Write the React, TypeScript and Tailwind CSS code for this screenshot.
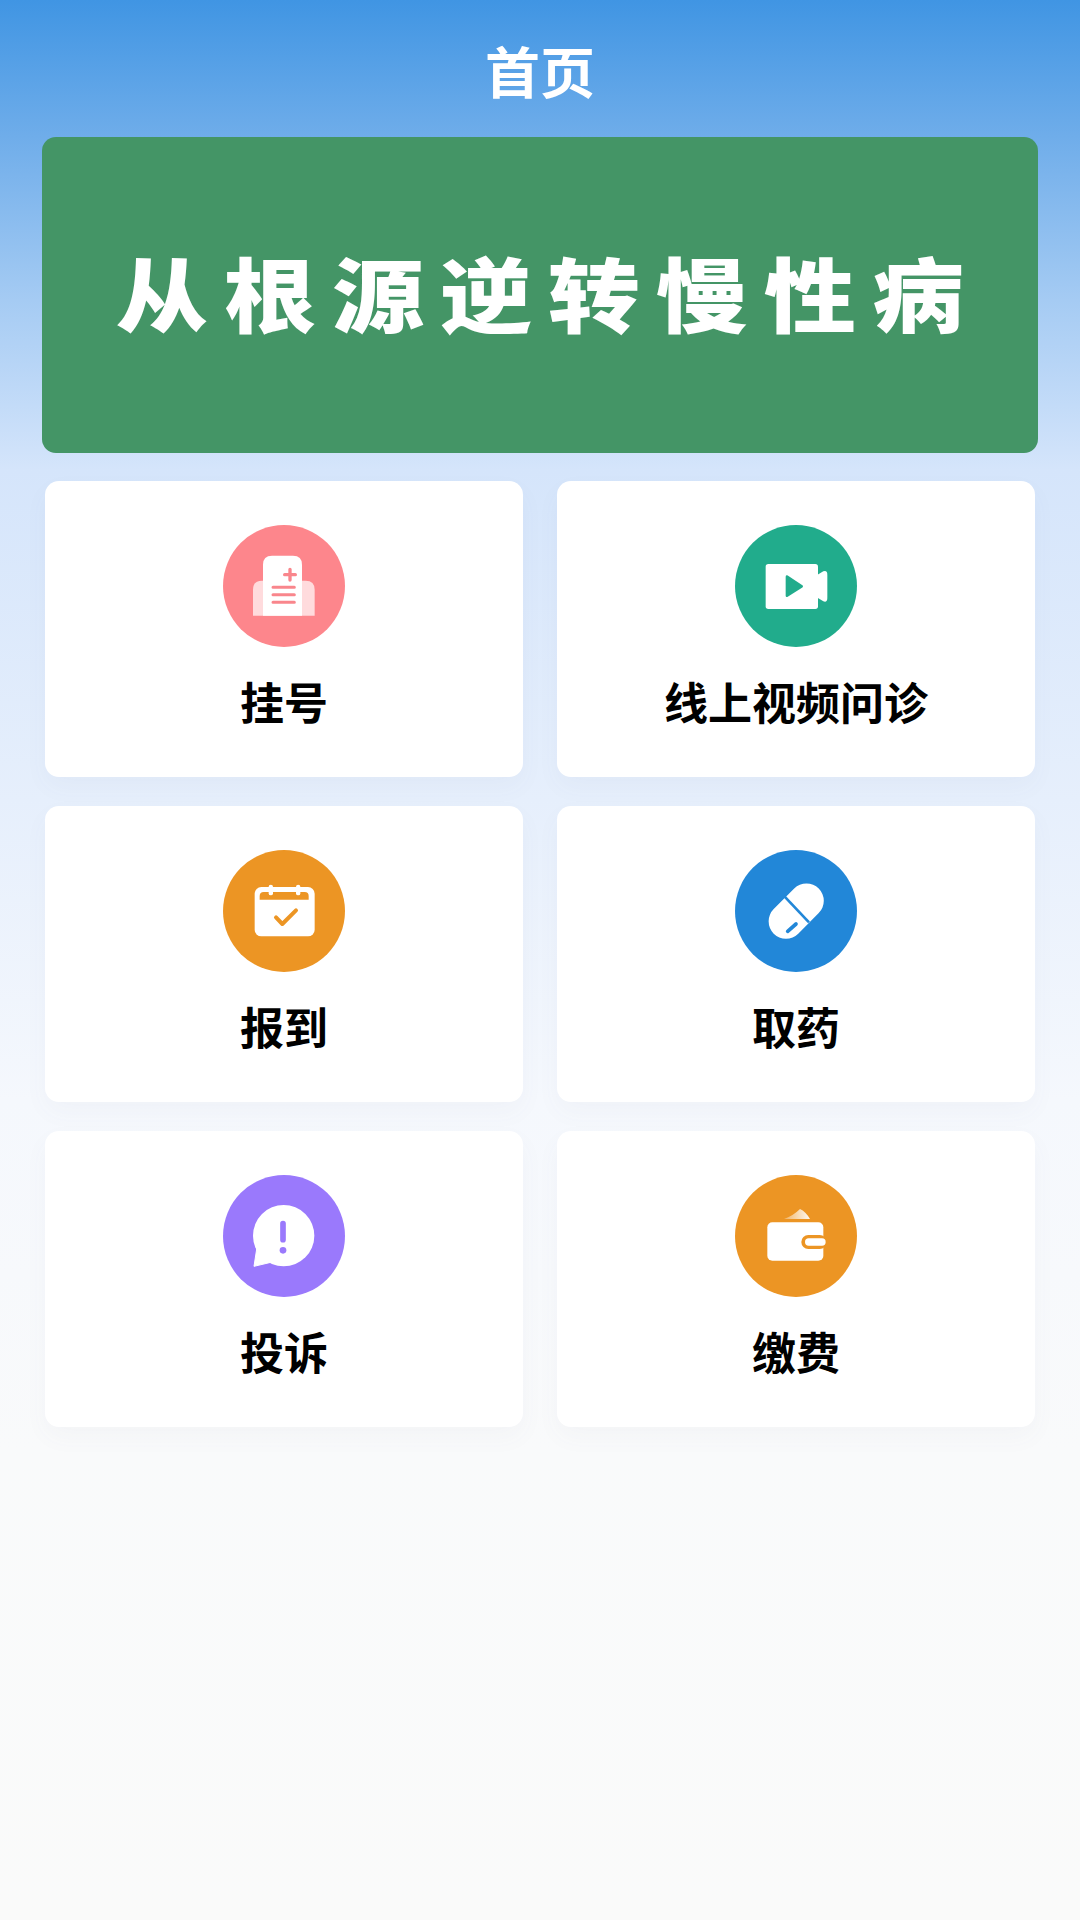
import React from "react";

const CJK = "font-['Noto_Sans_CJK_SC','Noto_Sans',sans-serif]";

function Circle({ color, vx, children }: { color: string; vx: number; children: React.ReactNode }) {
  return (
    <div className="w-[122px] h-[122px] rounded-full shrink-0" style={{ backgroundColor: color }}>
      <svg width="122" height="122" viewBox={`${vx} 46 366 366`} className="block">
        {children}
      </svg>
    </div>
  );
}

const DocIcon = (
  <>
    <path d="M160 318V240Q160 213 187 213H318Q345 213 345 240V318Z" fill="#fff" fillOpacity="0.7" />
    <path d="M190 318V165Q190 138 217 138H280Q307 138 307 165V318Z" fill="#fff" />
    <g stroke="#f9868c" strokeLinecap="round" fill="none">
      <path d="M255 195H287M271 179V211" strokeWidth="10" />
      <path d="M220 233H284M220 255H284M220 278H284" strokeWidth="9" />
    </g>
  </>
);

const VideoIcon = (
  <>
    <rect x="165" y="163" width="157" height="135" rx="8" fill="#fff" />
    <path d="M318 197L338 185Q350 181 350 195V265Q350 279 338 275L318 263Z" fill="#fff" />
    <path d="M229 201L273 230L229 258Z" fill="#21ac8c" stroke="#21ac8c" strokeWidth="8" strokeLinejoin="round" />
  </>
);

const CalendarIcon = (
  <>
    <rect x="165" y="157" width="180" height="148" rx="20" fill="#fff" />
    <path d="M180 195V184Q180 172 192 172H315Q327 172 327 184V195Z" fill="#ec9524" />
    <rect x="207" y="150" width="13" height="32" rx="6.5" fill="#fff" />
    <rect x="289" y="150" width="13" height="32" rx="6.5" fill="#fff" />
    <path d="M229 248L248 268L289 227" fill="none" stroke="#ec9524" strokeWidth="12" strokeLinecap="round" strokeLinejoin="round" />
  </>
);

const PillIcon = (
  <>
    <rect x="161" y="177" width="191" height="104" rx="52" fill="#fff" transform="rotate(-45 257 229)" />
    <path d="M222 186L295 263" stroke="#2287d8" strokeWidth="8" />
    <path d="M231 290L256 268" stroke="#2287d8" strokeWidth="11" strokeLinecap="round" />
  </>
);

const AlertIcon = (
  <>
    <circle cx="252" cy="228" r="92" fill="#fff" />
    <path d="M172 262L163 320L222 306Z" fill="#fff" stroke="#fff" strokeWidth="3" strokeLinejoin="round" />
    <path d="M250 192V240" stroke="#9a79fc" strokeWidth="17" strokeLinecap="round" />
    <circle cx="250" cy="272" r="10" fill="#9a79fc" />
  </>
);

const WalletIcon = (
  <>
    <defs>
      <linearGradient id="w" x1="0" x2="1" y1="0" y2="0">
        <stop offset="0" stopColor="#fff" stopOpacity="0.3" />
        <stop offset="1" stopColor="#fff" stopOpacity="0.95" />
      </linearGradient>
    </defs>
    <path d="M220 178Q248 168 268 148Q285 156 298 178Z" fill="url(#w)" />
    <rect x="170" y="188" width="168" height="115" rx="15" fill="#fff" />
    <rect x="272" y="226" width="76" height="42" rx="21" fill="#ec9524" />
    <rect x="283" y="236" width="62" height="22" rx="11" fill="#fff" />
  </>
);

const items = [
  { label: "挂号", color: "#fd868c", vx: 70, icon: DocIcon },
  { label: "线上视频问诊", color: "#21ac8c", vx: 73, icon: VideoIcon },
  { label: "报到", color: "#ec9524", vx: 70, icon: CalendarIcon },
  { label: "取药", color: "#2287d8", vx: 73, icon: PillIcon },
  { label: "投诉", color: "#9a79fc", vx: 70, icon: AlertIcon },
  { label: "缴费", color: "#ec9524", vx: 73, icon: WalletIcon },
];

export default function App() {
  return (
    <div
      className={`w-[1080px] h-[1920px] overflow-hidden ${CJK} bg-[linear-gradient(180deg,#4095e3_0px,#6fadea_137px,#a5cbf3_300px,#d5e5fb_470px,#e6effc_800px,#f5f8fd_1100px,#f9fafb_1450px,#fafafa_1920px)]`}
    >
      <header className="h-[137px] flex items-start justify-center pt-[33px]">
        <h1 className="text-[55px] leading-[72px] font-bold text-white">首页</h1>
      </header>
      <section className="mx-[42px] h-[316px] rounded-[14px] bg-[#449566] flex items-center justify-center pb-[8px]">
        <p className="text-[92px] leading-none font-black text-white tracking-[16px] pl-[16px] whitespace-nowrap scale-y-[0.88]">
          从根源逆转慢性病
        </p>
      </section>
      <main className="grid grid-cols-2 gap-x-[34px] gap-y-[29px] mt-[28px] mx-[45px]">
        {items.map((it) => (
          <div
            key={it.label}
            className="h-[296px] rounded-[14px] bg-white shadow-[0_10px_24px_rgba(90,100,130,0.04)] flex flex-col items-center pt-[44px]"
          >
            <Circle color={it.color} vx={it.vx}>
              {it.icon}
            </Circle>
            <div className="mt-[22px] text-[44px] leading-[64px] font-bold text-black whitespace-nowrap">{it.label}</div>
          </div>
        ))}
      </main>
    </div>
  );
}
